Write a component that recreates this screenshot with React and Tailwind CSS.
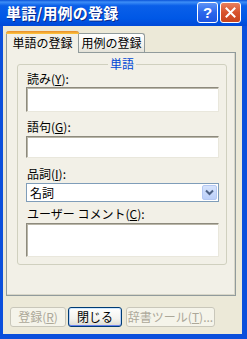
const FONT = { fontFamily: '"Noto Sans CJK JP", "Noto Sans", sans-serif' }

function Mn({ children }) {
  return <span className="underline underline-offset-[1px]">{children}</span>
}

function Edit({ h }) {
  return (
    <div
      className={`${h} bg-white border border-t-[#8d8a7d] border-l-[#8d8a7d] border-r-[#e9e7dc] border-b-[#e9e7dc] shadow-[inset_1px_1px_0_#b9b6a8]`}
    />
  )
}

function Label({ mt, children }) {
  return <div className={`${mt} h-[12px] leading-[12px] text-[12px] text-black pl-[1px]`}>{children}</div>
}

function TitleButton({ red, children }) {
  return (
    <div
      className={`w-[21px] h-[21px] rounded-[3px] border border-white flex items-center justify-center ${
        red
          ? 'bg-[linear-gradient(180deg,#e8805f_0%,#d8532d_50%,#c8441e_100%)]'
          : 'bg-[linear-gradient(180deg,#5d93f6_0%,#2b67ec_50%,#1e55e0_100%)]'
      }`}
    >
      {children}
    </div>
  )
}

function Button({ w, disabled, children }) {
  if (disabled) {
    return (
      <div className={`${w} h-[20px] rounded-[3px] border border-[#c9c7ba] bg-[#f5f4ea] flex items-center justify-center text-[12px] leading-[12px] text-[#aca899]`}>
        {children}
      </div>
    )
  }
  return (
    <div
      className={`${w} h-[20px] rounded-[3px] border border-[#003c74] bg-[linear-gradient(180deg,#ffffff_0%,#f4f3ee_60%,#dcdad0_100%)] shadow-[inset_0_1px_0_#cee7ff,inset_0_-1px_0_#6982ee,inset_1px_0_0_#b8d0f6,inset_-1px_0_0_#b8d0f6] flex items-center justify-center text-[12px] leading-[12px] text-black`}
    >
      {children}
    </div>
  )
}

export default function App() {
  return (
    <div className="w-[247px] h-[339px] flex flex-col overflow-hidden" style={FONT}>
      {/* Title bar */}
      <div className="h-[26px] shrink-0 flex items-center justify-between pl-[6px] pr-[6px] bg-[linear-gradient(180deg,#0a53d8_0%,#3d8ef7_8%,#0a5fe9_22%,#0058e6_70%,#0049d8_100%)]">
        <span className="text-white font-bold text-[15px] leading-[16px] tracking-[0.2px] [text-shadow:1px_1px_0_#0a2a8c]">
          単語/用例の登録
        </span>
        <div className="flex gap-[2px] -mt-[2px]">
          <TitleButton>
            <span className="text-white font-bold text-[15px] leading-[15px]" style={{ fontFamily: '"Liberation Sans", sans-serif' }}>?</span>
          </TitleButton>
          <TitleButton red>
            <svg width="11" height="11" viewBox="0 0 11 11">
              <path d="M1.5 1.5 L9.5 9.5 M9.5 1.5 L1.5 9.5" stroke="white" strokeWidth="2" strokeLinecap="square" />
            </svg>
          </TitleButton>
        </div>
      </div>

      {/* Client area */}
      <div className="flex-1 flex flex-col bg-[#ece9d8] border-l-[3px] border-r-[5px] border-b-[5px] border-[#0b4fdc]">
        <div className="pl-[3px] pr-[6px] pt-[5px]">
          {/* Tabs */}
          <div className="relative z-10 flex items-end h-[22px]">
            <div className="w-[73px] h-[22px] bg-[#f2f0e7] border-l border-r border-[#919b9c] rounded-t-[3px] flex flex-col">
              <div className="h-[3px] rounded-t-[3px] bg-[linear-gradient(180deg,#e68b2c_0%,#ffc73c_100%)] -mx-[1px]" />
              <div className="flex-1 flex items-center justify-center text-[12px] leading-[12px] text-black pb-[1px]">
                単語の登録
              </div>
            </div>
            <div className="w-[66px] h-[19px] mb-[1px] bg-[linear-gradient(180deg,#ffffff_0%,#f3f3ef_60%,#e4e2d8_100%)] border-t border-r border-[#919b9c] rounded-tr-[3px] flex items-center justify-center text-[12px] leading-[12px] text-black">
              用例の登録
            </div>
          </div>

          {/* Tab panel */}
          <div className="-mt-[1px] h-[244px] bg-[#f2f0e7] border border-[#919b9c] shadow-[inset_-1px_-1px_0_#d8d6c8] pt-[11px] pl-[10px] pr-[8px]">
            <div className="relative border border-[#d0d0bf] rounded-[3px] pl-[8px] pr-[7px] pb-[7px] flex flex-col">
              <span className="absolute -top-[7px] left-1/2 -translate-x-1/2 px-[2px] bg-[#f2f0e7] text-[12px] leading-[12px] text-[#0046d5]">
                単語
              </span>
              <Label mt="mt-[8px]">
                読み(<Mn>Y</Mn>):
              </Label>
              <div className="mt-[2px]">
                <Edit h="h-[25px]" />
              </div>
              <Label mt="mt-[9px]">
                語句(<Mn>G</Mn>):
              </Label>
              <div className="mt-[3px]">
                <Edit h="h-[22px]" />
              </div>
              <Label mt="mt-[10px]">
                品詞(<Mn>I</Mn>):
              </Label>
              <div className="mt-[3px] h-[19px] bg-white border border-[#7f9db9] flex items-center justify-between pl-[3px] pr-[1px]">
                <span className="text-[12px] leading-[12px] text-black">名詞</span>
                <div className="w-[15px] h-[15px] rounded-[2px] bg-[linear-gradient(180deg,#d6e3fc_0%,#bcd0f9_100%)] border border-[#b5c8f2] flex items-center justify-center">
                  <svg width="9" height="7" viewBox="0 0 9 7">
                    <path d="M1 1.5 L4.5 5 L8 1.5" stroke="#4d6185" strokeWidth="2" fill="none" />
                  </svg>
                </div>
              </div>
              <Label mt="mt-[6px]">
                ユーザー コメント(<Mn>C</Mn>):
              </Label>
              <div className="mt-[3px]">
                <Edit h="h-[34px]" />
              </div>
            </div>
          </div>
        </div>

        {/* Bottom buttons */}
        <div className="mt-[11px] pl-[7px] flex">
          <Button w="w-[56px]" disabled>
            登録(<Mn>R</Mn>)
          </Button>
          <div className="ml-[2px]">
            <Button w="w-[54px]">閉じる</Button>
          </div>
          <div className="ml-[4px]">
            <Button w="w-[89px]" disabled>
              辞書ツール(<Mn>T</Mn>)...
            </Button>
          </div>
        </div>
      </div>
    </div>
  )
}
